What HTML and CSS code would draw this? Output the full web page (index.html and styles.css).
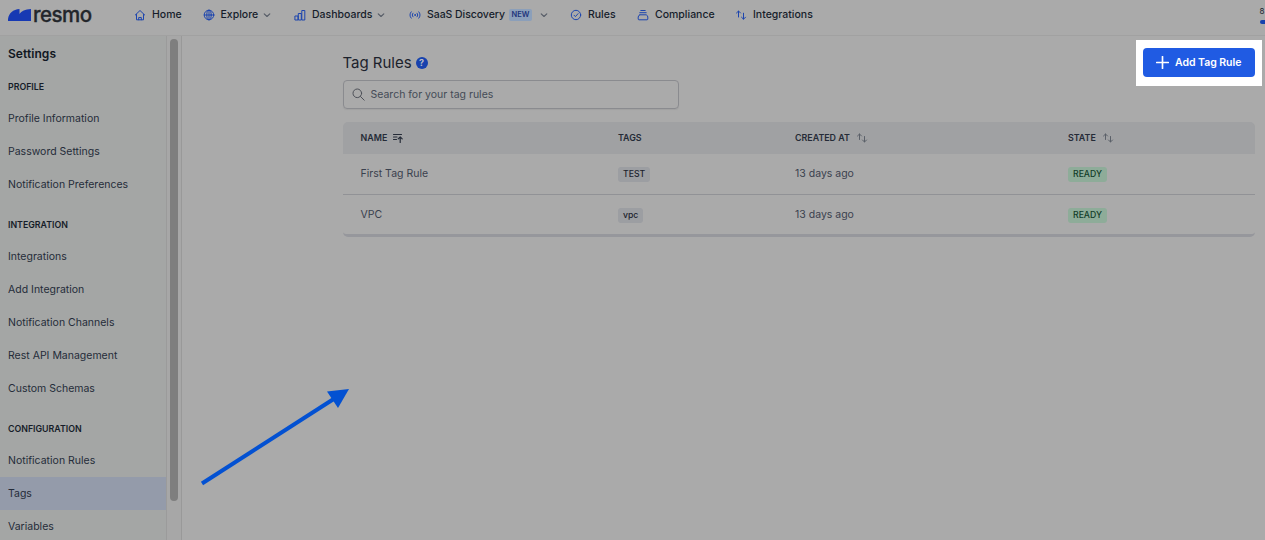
FILE: index.html
```html
<!DOCTYPE html>
<html lang="en">
<head>
<meta charset="utf-8">
<title>Resmo - Tag Rules</title>
<link rel="stylesheet" href="styles.css">
</head>
<body>
<svg class="symbols" aria-hidden="true">
  <symbol id="chevron" viewBox="0 0 8 8"><path d="M1.200 2.800 4 5.500 6.800 2.800"/></symbol>
  <symbol id="sort" viewBox="0 0 12 12"><path d="M3.500 7.500V2M1.500 4l2-2 2 2M8.500 4.500V10M6.500 8l2 2 2-2"/></symbol>
</svg>
<header class="topbar">
  <a class="brand">
    <svg class="brand-mark" viewBox="0 0 23 12"><path d="M0 12V10C1 4 5 .5 11.500 0V5C13.500 2 17 .3 23 0V12Z"/></svg>
    <span class="brand-name">resmo</span>
  </a>
  <nav class="nav">
    <a class="nav-item home"><svg class="icon" viewBox="0 0 12 12"><path d="M1.300 6 6 1.500 10.700 6M2.500 5.500v5.300h7V5.500M4.700 10.800V8.500h2.600v2.300"/></svg><span>Home</span></a>
    <a class="nav-item explore"><svg class="icon" viewBox="0 0 12 12"><circle cx="6" cy="6" r="4.800"/><ellipse cx="6" cy="6" rx="2.200" ry="4.800"/><path d="M1.200 6h9.600M6 1.200v9.600"/></svg><span>Explore</span><svg class="chevron"><use href="#chevron"/></svg></a>
    <a class="nav-item dashboards"><svg class="icon" viewBox="0 0 12 12"><path d="M1.300 7h2.700v4H1.300zM4.700 4.500h2.600V11H4.700zM8.200 1.500h2.600V11H8.200z"/></svg><span>Dashboards</span><svg class="chevron"><use href="#chevron"/></svg></a>
    <a class="nav-item discovery"><svg class="icon" viewBox="0 0 12 12"><path d="M2.200 2.800C.5 4.500.5 7.500 2.200 9.200M4 4.200c-1 1.200-1 2.400 0 3.600M9.800 2.800c1.700 1.700 1.700 4.700 0 6.400M8 4.200c1 1.200 1 2.400 0 3.600"/><circle cx="6" cy="6" r=".5"/></svg><span>SaaS Discovery</span><b class="new">NEW</b><svg class="chevron"><use href="#chevron"/></svg></a>
    <a class="nav-item rules"><svg class="icon" viewBox="0 0 12 12"><circle cx="6" cy="6" r="4.700"/><path d="m4 6.200 1.400 1.400 2.700-3"/></svg><span>Rules</span></a>
    <a class="nav-item compliance"><svg class="icon" viewBox="0 0 12 12"><path d="M3.800 1.500h4.400M2.800 3.700h6.400M2.800 5.800h6.400Q10.800 6.500 10.800 8v2q0 .8-.8.800H2q-.8 0-.8-.8V8Q1.200 6.500 2.800 5.800"/></svg><span>Compliance</span></a>
    <a class="nav-item integrations"><svg class="icon" viewBox="0 0 12 12"><path d="M3.500 8V2.200M1.500 4l2-2 2 2M8.500 4.200V10M6.500 8.200l2 2 2-2"/></svg><span>Integrations</span></a>
  </nav>
  <div class="usage"><span>8</span><i class="usage-bar"></i></div>
</header>
<div class="layout">
  <aside class="sidebar">
    <h2 class="side-title">Settings</h2>
    <h3 class="side-heading">PROFILE</h3>
    <a class="side-link">Profile Information</a>
    <a class="side-link">Password Settings</a>
    <a class="side-link">Notification Preferences</a>
    <h3 class="side-heading">INTEGRATION</h3>
    <a class="side-link">Integrations</a>
    <a class="side-link">Add Integration</a>
    <a class="side-link">Notification Channels</a>
    <a class="side-link">Rest API Management</a>
    <a class="side-link">Custom Schemas</a>
    <h3 class="side-heading">CONFIGURATION</h3>
    <a class="side-link">Notification Rules</a>
    <a class="side-link active">Tags</a>
    <a class="side-link">Variables</a>
  </aside>
  <div class="scroll-track"><div class="scroll-thumb"></div></div>
  <main class="content">
    <div class="heading-row">
      <h1 class="title">Tag Rules</h1>
      <span class="help">?</span>
      <div class="spotlight"><button class="add"><svg class="plus" viewBox="0 0 14 14"><path d="M7 .7v12.600M.7 7h12.600"/></svg><span>Add Tag Rule</span></button></div>
    </div>
    <div class="search"><svg class="search-icon" viewBox="0 0 13 13"><circle cx="5.300" cy="5.300" r="4.300"/><path d="m8.500 8.500 3.700 3.700"/></svg><span>Search for your tag rules</span></div>
    <section class="table">
      <div class="row head">
        <div>NAME <svg class="sort-name" viewBox="0 0 12 12"><path d="M1.500 2.500h8M1.500 5h3.500M1.500 7.500h3M8.200 10.500V5M6.200 6.800l2-2 2 2"/></svg></div>
        <div>TAGS</div>
        <div>CREATED AT <svg class="sort"><use href="#sort"/></svg></div>
        <div>STATE <svg class="sort"><use href="#sort"/></svg></div>
      </div>
      <div class="row"><div>First Tag Rule</div><div><span class="tag">TEST</span></div><div>13 days ago</div><div><span class="tag ready">READY</span></div></div>
      <div class="row"><div>VPC</div><div><span class="tag">vpc</span></div><div>13 days ago</div><div><span class="tag ready">READY</span></div></div>
    </section>
    <svg class="arrow" viewBox="0 0 150 100"><path class="arrow-line" d="M2 94.500 136 8.500"/><path class="arrow-head" d="M149 0 127 2.500l11 16.500z"/></svg>
  </main>
</div>
</body>
</html>
```
FILE: styles.css
```css
* { box-sizing: border-box; }
body { margin: 0; width: 1265px; height: 540px; overflow: hidden; background: #aaa; color: #1d232e; font-family: Inter, "Liberation Sans", sans-serif; font-size: 10.5px; }
svg { flex: none; fill: none; stroke: currentColor; stroke-linecap: round; stroke-linejoin: round; }
h1, h2, h3 { margin: 0; }
.symbols { display: none; }

.topbar { display: flex; height: 36px; border-bottom: 1px solid #a1a1a1; overflow: hidden; }
.brand { display: flex; width: 134px; padding: 9px 0 0 8px; }
.brand-mark { width: 23px; height: 12px; fill: #1739b3; stroke: none; }
.brand-name { margin: -8px 0 0 2px; height: 26px; line-height: 27px; font-size: 20.500px; font-weight: 500; letter-spacing: -.5px; color: #23262b; -webkit-text-stroke: .3px #23262b; }
.nav { display: flex; height: 28px; align-items: center; flex: 1; font-weight: 500; color: #161d2a; white-space: nowrap; }
.nav-item { display: flex; align-items: center; flex: none; }
.icon { width: 12px; height: 12px; margin: 1px 6px 0 0; color: #1d45ae; stroke-width: 1; }
.chevron { width: 8px; height: 8px; margin: 1px 0 0 5px; color: #555b66; stroke-width: 1.100; }
.home { width: 68.500px; }
.explore { width: 91.500px; }
.dashboards { width: 115px; }
.discovery { width: 161px; }
.rules { width: 67px; }
.compliance { width: 98px; }
.discovery span { letter-spacing: -.05px; }
.new { margin: 2px 3px 0 4px; width: 23px; text-align: center; height: 12px; line-height: 12px; border-radius: 2px; background: #8b9fba; color: #1d347b; font-size: 7.500px; font-weight: 600; }
.usage { width: 5.500px; padding-top: 4px; font-size: 8px; line-height: 14px; }
.usage-bar { display: block; width: 60px; height: 4px; margin-top: 2px; border-radius: 2px; background: #1742ae; }

.layout { display: flex; height: 504px; }
.sidebar { width: 166px; background: #a4a6a5; overflow: hidden; }
.side-title { height: 27px; padding: 9px 8px 0; font-size: 12px; line-height: 18px; font-weight: 600; letter-spacing: .06px; color: #101722; }
.side-heading { height: 39px; padding: 16px 8px 0; font-size: 8.800px; line-height: 15px; font-weight: 600; color: #161d29; }
.side-link { display: block; height: 33px; padding: 0 8px; line-height: 33px; color: #252c39; white-space: nowrap; }
.active { background: #949baa; }
.scroll-track { width: 16px; padding: 3px 3px 0; background: #a7a7a7; border-left: 1px solid #9b9b9b; border-right: 1px solid #999; }
.scroll-thumb { width: 8px; height: 462px; border-radius: 4px; background: #7e7e7e; }

.content { flex: 1; padding: 4px 3px 0 161px; }
.heading-row { display: flex; align-items: center; height: 46px; }
.title { font-size: 15px; font-weight: 400; line-height: 20px; margin-left: -.5px; letter-spacing: -.02px; color: #1c222c; }
.help { margin-left: 4px; width: 12px; height: 12px; border-radius: 50%; background: #1742ae; color: #b8bdc8; font-size: 9px; line-height: 12px; font-weight: 700; text-align: center; }
.spotlight { margin-left: auto; width: 126px; height: 46px; padding: 8px 7px 9px; background: #fff; }
.add { display: flex; align-items: center; width: 112px; height: 29px; padding: 0 13px 1px; border: 0; border-radius: 4px; background: #205be3; color: #fff; font: 600 10.5px Inter, sans-serif; letter-spacing: -.04px; white-space: nowrap; }
.plus { width: 13px; height: 13px; margin: 1px 6px 0 0; stroke-width: 1.800; }
.search { display: flex; align-items: center; width: 336px; height: 29px; margin-top: -6px; padding: 0 8px 1px 7.500px; border: 1px solid #8a8b8f; border-radius: 4px; color: #444a56; box-shadow: 0 1px 1px #a0a0a0; }
.search-icon { width: 13px; height: 13px; margin-right: 6px; color: #4d5058; }
.table { width: 912px; margin-top: 13px; border-radius: 5px; overflow: hidden; border-bottom: 3px solid #96979c; }
.row { display: grid; grid-template-columns: 257.500px 177px 273px 1fr; align-items: center; height: 41px; padding: 0 0 1px 17.500px; color: #3a414e; border-bottom: 1px solid #919296; }
.row:last-child { height: 39px; border: 0; padding-bottom: 0; }
.row > div { display: flex; align-items: center; }
.head { height: 32px; border: 0; background: #a0a1a3; color: #252b37; font-size: 8.900px; font-weight: 600; }
.sort-name { width: 12px; height: 12px; margin: 1px 0 0 5px; stroke-width: 1.200; }
.sort { width: 12px; height: 12px; margin: 1px 0 0 6px; color: #5b6069; }
.tag { height: 15px; padding: 0 5px; margin-top: 1px; border-radius: 3px; background: #9c9ea2; color: #1d232e; font-size: 8.700px; line-height: 14px; font-weight: 500; }
.ready { background: #8eac99; color: #123d29; }
.arrow { position: absolute; left: 200px; top: 389px; width: 150px; height: 100px; }
.arrow-line { stroke: #0351d2; stroke-width: 4; stroke-linecap: butt; }
.arrow-head { fill: #0351d2; stroke: none; }
```
